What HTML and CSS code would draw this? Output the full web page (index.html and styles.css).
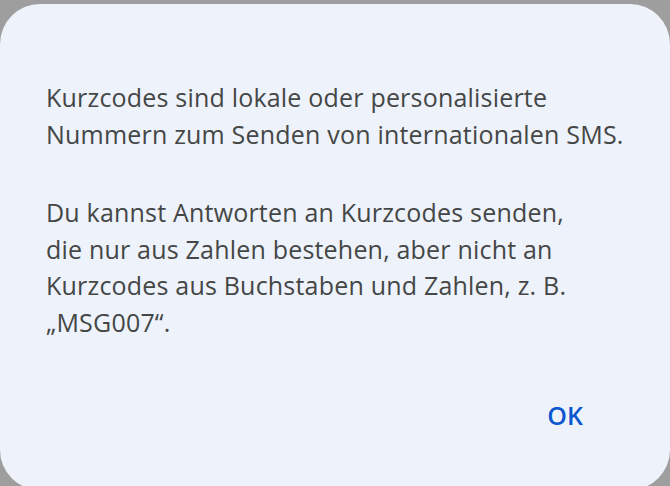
FILE: index.html
```html
<!DOCTYPE html>
<html lang="de">
<head>
    <meta charset="UTF-8">
    <meta name="viewport" content="width=device-width, initial-scale=1.0">
    <title>Kurzcodes</title>
    <link rel="stylesheet" href="styles.css">
</head>
<body>
    <div class="dialog">
        <div class="message">
            <p>Kurzcodes sind lokale oder personalisierte<br>Nummern zum Senden von internationalen SMS.</p>
            <p>Du kannst Antworten an Kurzcodes senden,<br>die nur aus Zahlen bestehen, aber nicht an<br>Kurzcodes aus Buchstaben und Zahlen, z. B.<br>„MSG007“.</p>
        </div>
        <div class="actions">
            <a href="javascript:;" class="btn-ok">OK</a>
        </div>
    </div>
</body>
</html>
```

FILE: styles.css
```css
*{padding:0;margin:0;box-sizing:border-box}
a{text-decoration:none}
html,body{
    width:670px;
    height:486px;
    overflow:hidden;
    background:#9e9e9e;
}
body{
    padding-top:4px;
    font-family:"Open Sans",Roboto,sans-serif;
}
.dialog{
    width:670px;
    height:486px;
    background:#eef2fa;
    border-radius:40px;
    padding:75px 46px 0 46px;
    display:flex;
    flex-direction:column;
}
.message{
    color:#444746;
    font-size:25px;
    line-height:36.5px;
    letter-spacing:0.2px;
}
.message p{
    margin-bottom:42px;
}
.message p:last-child{
    margin-bottom:0;
}
.actions{
    display:flex;
    justify-content:flex-end;
    margin-top:55px;
    padding-right:29px;
}
.btn-ok{
    color:#0b57d0;
    font-size:25px;
    font-weight:600;
    line-height:40px;
    padding:0 12px;
}
```
